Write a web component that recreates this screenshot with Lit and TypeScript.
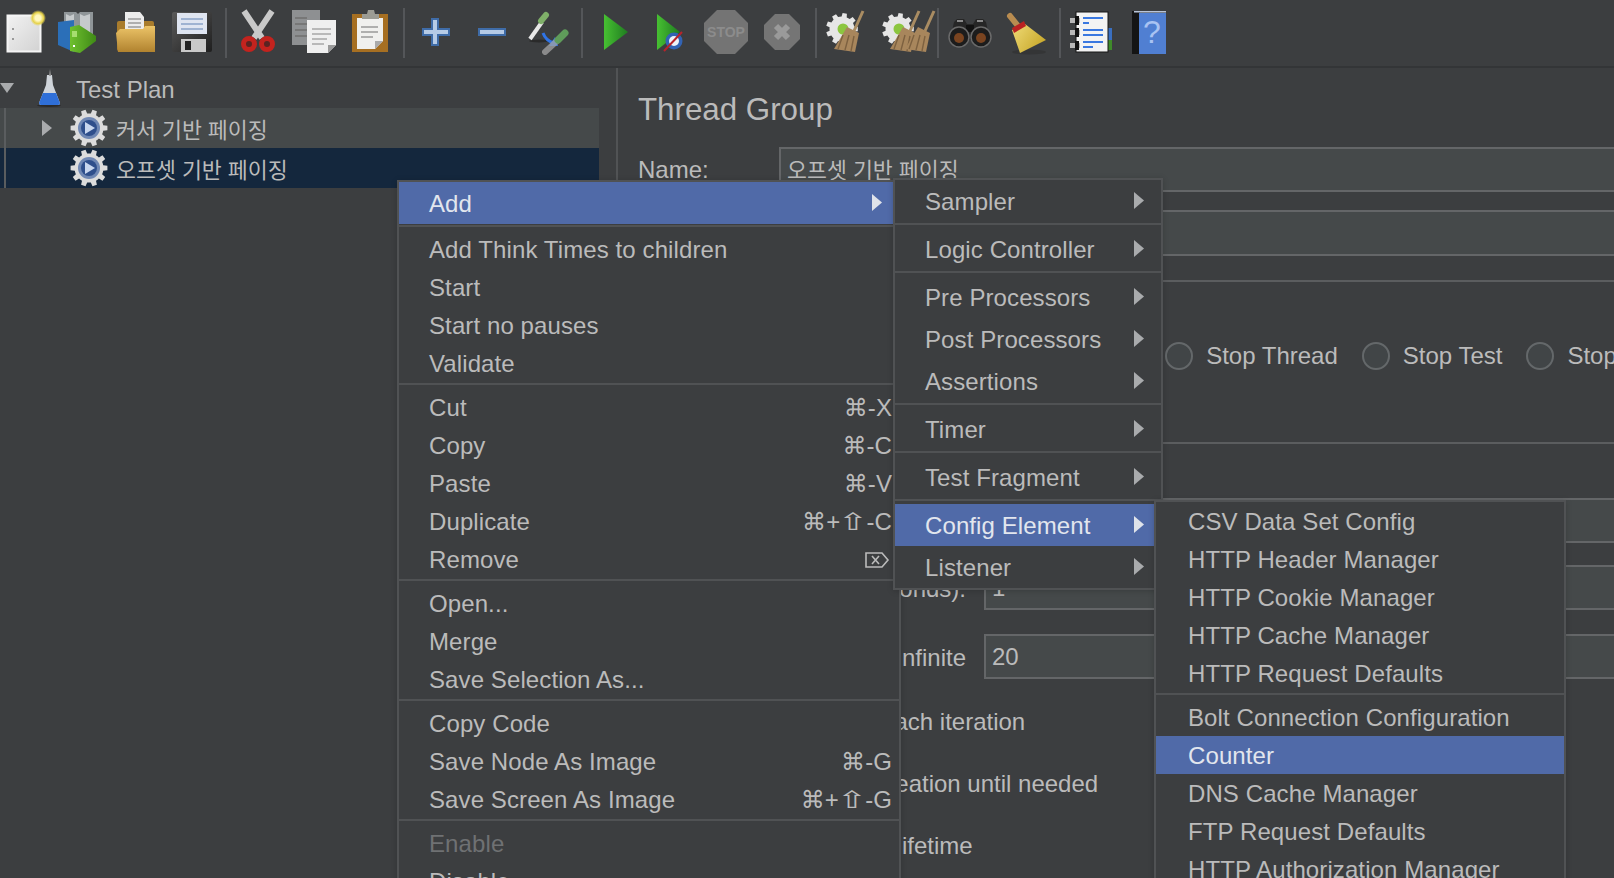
import { LitElement, css, html, svg } from "lit";
import { customElement } from "lit/decorators.js";
import { classMap } from "lit/directives/class-map.js";

type MenuItem = {
  label?: string;
  shortcut?: string;
  del?: boolean;
  arrow?: boolean;
  active?: boolean;
  disabled?: boolean;
  sep?: boolean;
};

const gearPath = (cx: number, cy: number, outer: number, inner: number, teeth: number) => {
  const pts: string[] = [];
  const step = (Math.PI * 2) / teeth;
  for (let i = 0; i < teeth; i++) {
    const a = i * step;
    const p = (r: number, o: number) =>
      `${(cx + r * Math.cos(a + o)).toFixed(1)},${(cy + r * Math.sin(a + o)).toFixed(1)}`;
    pts.push(p(inner, -step * 0.5), p(inner, -step * 0.3), p(outer, -step * 0.2), p(outer, step * 0.2), p(inner, step * 0.3));
  }
  return pts.join(" ");
};

const broomHead = (dx: number) => svg`
  <line x1=${38 + dx} y1="2" x2=${29 + dx} y2="22" stroke="#a98c62" stroke-width="3"></line>
  <polygon points="${22 + dx},18 ${34 + dx},24 ${30 + dx},43 ${9 + dx},40" fill="#a8865c"></polygon>
  <path d="M${18 + dx} 26L${13 + dx} 40M${24 + dx} 26L${20 + dx} 41M${29 + dx} 27L${26 + dx} 42" stroke="#7d6140" stroke-width="1.4" fill="none"></path>
`;

const clearGear = svg`
  <polygon points=${gearPath(17, 20, 16, 12.5, 9)} fill="#e6e6e6"></polygon>
  <circle cx="18" cy="20" r="5.5" fill="#8cc63f"></circle>
`;

const ICONS: Record<string, unknown> = {
  doc: svg`
    <defs><linearGradient id="d1" x1="0" y1="0" x2="1" y2="1"><stop offset="0" stop-color="#f2f2f2"></stop><stop offset="1" stop-color="#d2d2d2"></stop></linearGradient>
    <radialGradient id="d2"><stop offset="0.35" stop-color="#fff8c0"></stop><stop offset="0.7" stop-color="#e6d24a"></stop><stop offset="1" stop-color="#e6d24a" stop-opacity="0"></stop></radialGradient></defs>
    <rect x="6.5" y="6.5" width="33" height="36" fill="url(#d1)" stroke="#f5f5f5" stroke-width="2"></rect>
    <rect x="11" y="19" width="2" height="2" fill="#999"></rect><rect x="11" y="29" width="2" height="2" fill="#999"></rect>
    <circle cx="37" cy="9" r="8" fill="url(#d2)"></circle>`,
  tmpl: svg`
    <defs><linearGradient id="t1" x1="0" y1="0" x2="1" y2="0"><stop offset="0" stop-color="#6fc02f"></stop><stop offset="1" stop-color="#3f8a16"></stop></linearGradient></defs>
    <path d="M7 3h12l2 2 2-2h13v24H7z" fill="#8f9598"></path>
    <path d="M9 5l4 2 4-2v18H9zM23 5l4 2 6-2v18H23z" fill="#c6cacc"></path>
    <polygon points="1,13 17,11 17,43 1,36" fill="#2b6fb8"></polygon>
    <polygon points="13,18 22,16 39,27 39,32 23,44 13,42" fill="url(#t1)"></polygon>
    <rect x="15" y="22" width="5" height="6" fill="#a6dd70"></rect><rect x="16" y="36" width="2" height="2" fill="#fff"></rect>`,
  folder: svg`
    <defs><linearGradient id="f1" x1="0" y1="0" x2="0" y2="1"><stop offset="0" stop-color="#ecc468"></stop><stop offset="1" stop-color="#b1832f"></stop></linearGradient></defs>
    <rect x="4" y="12" width="37" height="30" rx="2" fill="#a97c2c"></rect>
    <polygon points="12,3 27,3 31,8 31,28 12,28" fill="#ececec"></polygon>
    <path d="M15 10h13M15 14h13M15 18h13M15 22h13" stroke="#9a9a9a" stroke-width="1.5"></path>
    <polygon points="3,24 7,20 30,20 32,17 42,17 42,43 5,43" fill="url(#f1)"></polygon>`,
  save: svg`
    <defs><linearGradient id="s1" x1="0" y1="0" x2="1" y2="1"><stop offset="0" stop-color="#5a5a5a"></stop><stop offset="1" stop-color="#1f1f1f"></stop></linearGradient></defs>
    <rect x="3" y="3" width="40" height="40" rx="2" fill="url(#s1)"></rect>
    <rect x="8" y="4" width="30" height="21" fill="#dfe5f1"></rect>
    <path d="M12 10h22M12 15h22M12 20h22" stroke="#8aa2c8" stroke-width="1.6"></path>
    <rect x="12" y="30" width="25" height="13" fill="#c9c9c9"></rect><rect x="16" y="32" width="6" height="9" fill="#222"></rect>`,
  cut: svg`
    <path d="M9 2L27 29M37 2L19 29" stroke="#c9c9c9" stroke-width="6" fill="none"></path>
    <circle cx="14" cy="35" r="5.5" fill="#5a2422" stroke="#c3231e" stroke-width="5"></circle>
    <circle cx="32" cy="35" r="5.5" fill="#5a2422" stroke="#c3231e" stroke-width="5"></circle>`,
  copy: svg`
    <rect x="1" y="1" width="28" height="35" fill="#8e9092"></rect>
    <path d="M4 9h12M4 15h12M4 21h12M4 27h12" stroke="#777" stroke-width="2"></path>
    <polygon points="16,11 45,11 45,36 37,44 16,44" fill="#efefef"></polygon>
    <polygon points="37,44 37,36 45,36" fill="#9a9a9a"></polygon>
    <path d="M21 20h19M21 25h19M21 30h15M21 35h12" stroke="#a8a8a8" stroke-width="1.6"></path>`,
  paste: svg`
    <rect x="5" y="5" width="36" height="38" fill="#a66f22"></rect>
    <polygon points="10,9 36,9 36,32 28,40 10,40" fill="#f0f0ee"></polygon>
    <polygon points="28,40 28,32 36,32" fill="#aaa"></polygon>
    <path d="M14 18h17M14 23h17M14 28h12" stroke="#999" stroke-width="1.6"></path>
    <path d="M15 10V5h5l1-4h6l1 4h4v5z" fill="#9c9c94"></path>`,
  plus: svg`<path d="M19 10h6v10h11v6H25v10h-6V26H10v-6h9z" fill="#b6cbe6" stroke="#3f6ca8" stroke-width="2"></path>`,
  minus: svg`<rect x="10" y="20" width="26" height="6" fill="#b6cbe6" stroke="#3f6ca8" stroke-width="2"></rect>`,
  dropper: svg`
    <ellipse cx="14" cy="32" rx="10" ry="1.5" fill="#2a2a2a"></ellipse>
    <line x1="5" y1="30" x2="17" y2="13" stroke="#e8e8e8" stroke-width="4"></line>
    <line x1="16" y1="12" x2="21" y2="6" stroke="#7fb069" stroke-width="6" stroke-linecap="round"></line>
    <path d="M18 24Q21 32 29 34" stroke="#2f74e6" stroke-width="3" fill="none"></path>
    <polygon points="30,28 33,37 24,37" fill="#2f74e6"></polygon>
    <line x1="20" y1="43" x2="33" y2="31" stroke="#a4a4a4" stroke-width="6" stroke-linecap="round" opacity=".75"></line>
    <line x1="33" y1="31" x2="40" y2="24" stroke="#5f9c5a" stroke-width="7" stroke-linecap="round"></line>`,
  run: svg`
    <defs><linearGradient id="r1" x1="0" y1="0" x2="1" y2="0"><stop offset="0" stop-color="#47c032"></stop><stop offset="1" stop-color="#1f7c20"></stop></linearGradient></defs>
    <polygon points="13,5 37,23 13,41" fill="url(#r1)"></polygon>`,
  nopause: svg`
    <defs><linearGradient id="n1" x1="0" y1="0" x2="1" y2="0"><stop offset="0" stop-color="#47c032"></stop><stop offset="1" stop-color="#1f7c20"></stop></linearGradient></defs>
    <polygon points="10,5 33,23 10,41" fill="url(#n1)"></polygon>
    <circle cx="27" cy="32" r="8.5" fill="#3263b4"></circle><circle cx="27" cy="32" r="5" fill="#eef2f8"></circle>
    <line x1="17" y1="42" x2="35" y2="23" stroke="#b8232a" stroke-width="2"></line>`,
  stop: svg`
    <polygon points="14,1 32,1 45,14 45,32 32,45 14,45 1,32 1,14" fill="#747474"></polygon>
    <text x="23" y="28" text-anchor="middle" font-family="Liberation Sans" font-weight="700" font-size="14" fill="#8c8c8c">STOP</text>`,
  shutdown: svg`
    <polygon points="16,5 30,5 41,16 41,30 30,41 16,41 5,30 5,16" fill="#757575"></polygon>
    <path d="M17 17L29 29M29 17L17 29" stroke="#9a9a9a" stroke-width="6"></path>`,
  clear: svg`${clearGear}${broomHead(0)}`,
  clearall: svg`${clearGear}${broomHead(0)}${broomHead(15)}`,
  bino: svg`
    <path d="M7 13l3-3h7l3 5h6l3-5h7l3 3 4 18H3z" fill="#262626"></path>
    <rect x="19" y="16" width="8" height="7" fill="#111"></rect>
    <circle cx="12" cy="28" r="10" fill="#1c1c1c" stroke="#6a6a6a" stroke-width="1.5"></circle>
    <circle cx="34" cy="28" r="10" fill="#1c1c1c" stroke="#6a6a6a" stroke-width="1.5"></circle>
    <circle cx="12" cy="29" r="5" fill="#7a4420"></circle><circle cx="34" cy="29" r="5" fill="#7a4420"></circle>
    <path d="M10 12h6M30 12h6" stroke="#8a8a8a" stroke-width="2"></path>`,
  broom: svg`
    <defs><linearGradient id="b1" x1="0" y1="0" x2="1" y2="0.6"><stop offset="0" stop-color="#f0dc78"></stop><stop offset="1" stop-color="#c9a92c"></stop></linearGradient></defs>
    <ellipse cx="26" cy="43" rx="17" ry="2.5" fill="#343536"></ellipse>
    <line x1="7" y1="7" x2="15" y2="17" stroke="#b98c50" stroke-width="6" stroke-linecap="round"></line>
    <polygon points="9,21 22,15 43,31 17,44" fill="url(#b1)"></polygon>
    <polygon points="9,19 21,12 23,17 11,24" fill="#bb2222"></polygon>`,
  log: svg`
    <rect x="33" y="19" width="10" height="12" fill="#3a6fc0"></rect><rect x="33" y="31" width="10" height="10" fill="#3f8a2a"></rect>
    <rect x="7" y="3" width="32" height="40" fill="#f3f3f3" stroke="#161616" stroke-width="1"></rect>
    <path d="M1 9h10v5H1zM1 21h10v5H1zM1 34h10v5H1z" fill="#b8b8b8"></path>
    <path d="M8 7v9M8 19v9M8 32v9" stroke="#111" stroke-width="4"></path>
    <path d="M14 9h20M14 14h6M14 21h20M14 26h20M14 33h20M14 38h10" stroke="#3a78e0" stroke-width="2"></path>`,
  help: svg`
    <rect x="7" y="2" width="8" height="43" fill="#141414"></rect>
    <rect x="14" y="4" width="27" height="41" fill="#507fd2"></rect>
    <rect x="9" y="2" width="32" height="1.5" fill="#b8c4d8"></rect>
    <text x="27" y="34" text-anchor="middle" font-family="Liberation Sans" font-size="32" fill="#a9c3f2">?</text>`,
};

const TOOLBAR: string[][] = [
  ["doc", "tmpl", "folder", "save"],
  ["cut", "copy", "paste"],
  ["plus", "minus", "dropper"],
  ["run", "nopause", "stop", "shutdown"],
  ["clear", "clearall"],
  ["bino", "broom"],
  ["log", "help"],
];

const MAIN_MENU: MenuItem[] = [
  { label: "Add", arrow: true, active: true },
  { sep: true },
  { label: "Add Think Times to children" },
  { label: "Start" },
  { label: "Start no pauses" },
  { label: "Validate" },
  { sep: true },
  { label: "Cut", shortcut: "⌘-X" },
  { label: "Copy", shortcut: "⌘-C" },
  { label: "Paste", shortcut: "⌘-V" },
  { label: "Duplicate", shortcut: "⌘+⇧-C" },
  { label: "Remove", del: true },
  { sep: true },
  { label: "Open..." },
  { label: "Merge" },
  { label: "Save Selection As..." },
  { sep: true },
  { label: "Copy Code" },
  { label: "Save Node As Image", shortcut: "⌘-G" },
  { label: "Save Screen As Image", shortcut: "⌘+⇧-G" },
  { sep: true },
  { label: "Enable", disabled: true },
  { label: "Disable" },
];

const ADD_MENU: MenuItem[] = [
  { label: "Sampler", arrow: true },
  { sep: true },
  { label: "Logic Controller", arrow: true },
  { sep: true },
  { label: "Pre Processors", arrow: true },
  { label: "Post Processors", arrow: true },
  { label: "Assertions", arrow: true },
  { sep: true },
  { label: "Timer", arrow: true },
  { sep: true },
  { label: "Test Fragment", arrow: true },
  { sep: true },
  { label: "Config Element", arrow: true, active: true },
  { label: "Listener", arrow: true },
];

const CONFIG_MENU: MenuItem[] = [
  { label: "CSV Data Set Config" },
  { label: "HTTP Header Manager" },
  { label: "HTTP Cookie Manager" },
  { label: "HTTP Cache Manager" },
  { label: "HTTP Request Defaults" },
  { sep: true },
  { label: "Bolt Connection Configuration" },
  { label: "Counter", active: true },
  { label: "DNS Cache Manager" },
  { label: "FTP Request Defaults" },
  { label: "HTTP Authorization Manager" },
];

@customElement("app-root")
export class AppRoot extends LitElement {
  static styles = css`
    :host {
      display: block;
      width: 1614px;
      height: 878px;
      overflow: hidden;
      position: relative;
      background: #3c3e40;
      color: #bbbbbb;
      font-family: "Liberation Sans", "Noto Sans CJK KR", sans-serif;
      font-size: 24px;
    }
    .toolbar {
      display: flex;
      align-items: center;
      gap: 8px;
      height: 66px;
      padding-left: 1px;
      border-bottom: 2px solid #333537;
      background: #3c3e40;
    }
    .tool-group {
      display: flex;
      gap: 8px;
    }
    .tool {
      display: block;
      width: 48px;
      height: 48px;
      overflow: visible;
    }
    .tool-sep {
      width: 2px;
      height: 50px;
      background: #545659;
    }
    .body {
      display: flex;
      height: 810px;
    }
    .tree {
      width: 599px;
      flex: none;
    }
    .tree-row {
      display: flex;
      align-items: center;
      height: 40px;
      white-space: nowrap;
    }
    .tree-child {
      padding-left: 42px;
      background: linear-gradient(#5a5d5f, #5a5d5f) 4px 0 / 2px 100% no-repeat, #45494a;
    }
    .tree-child.selected {
      background: linear-gradient(#5a5d5f, #5a5d5f) 4px 0 / 2px 100% no-repeat, #14273d;
    }
    .twist {
      display: block;
      flex: none;
    }
    .flask {
      margin: 0 15px 0 23px;
      flex: none;
    }
    .plan-label {
      padding-top: 4px;
    }
    .gear {
      margin: 0 8px 0 18px;
      flex: none;
    }
    .no-twist {
      width: 10px;
    }
    .ko {
      font-size: 21.7px;
    }
    .detail {
      flex: 1;
      margin-left: 17px;
      border-left: 2px solid #515355;
      padding-left: 20px;
      min-width: 0;
    }
    .title {
      font-size: 31.3px;
      line-height: 36px;
      padding-top: 24px;
      margin-bottom: 19px;
    }
    .field-row {
      display: flex;
      align-items: center;
    }
    .name-label {
      width: 141px;
      flex: none;
      padding-top: 1px;
    }
    .input {
      flex: 1;
      height: 45px;
      box-sizing: border-box;
      border: 2px solid #646668;
      border-right: none;
      background: #45494a;
      padding: 0 6px;
      line-height: 42px;
      white-space: nowrap;
    }
    .comments {
      margin: 18px 0 24px;
    }
    .comments .input {
      height: 46px;
    }
    .panel {
      border-top: 2px solid #5b5d5f;
      margin-left: -8px;
      padding-left: 8px;
      box-sizing: border-box;
    }
    .action {
      height: 162px;
    }
    .radios {
      display: flex;
      gap: 24px;
      padding: 60px 0 0 52px;
      white-space: nowrap;
    }
    .radio {
      display: flex;
      align-items: center;
      gap: 13px;
    }
    .radio i {
      display: block;
      width: 24px;
      height: 24px;
      border: 2px solid #64686a;
      border-radius: 50%;
      background: #414547;
    }
    .threads {
      padding-top: 54px;
    }
    .count-label {
      width: 328px;
      margin-right: 18px;
      padding-top: 2px;
      text-align: right;
      flex: none;
      white-space: nowrap;
    }
    .gap-22 {
      margin-top: 22px;
    }
    .gap-24 {
      margin-top: 24px;
    }
    .check-row {
      height: 62px;
      line-height: 62px;
      padding-left: 87px;
      white-space: nowrap;
    }
    .check-row.lifetime {
      padding-left: 91px;
    }
    .checks {
      padding-top: 12px;
    }
    .menu {
      position: absolute;
      box-sizing: border-box;
      border: 2px solid #505254;
      background: #3c3e40;
      box-shadow: 0 1px 6px rgba(0, 0, 0, 0.18);
      letter-spacing: 0.1px;
    }
    .menu-main {
      left: 397px;
      top: 180px;
      width: 504px;
      height: 760px;
    }
    .menu-add {
      left: 893px;
      top: 178px;
      width: 270px;
      height: 412px;
    }
    .menu-config {
      left: 1154px;
      top: 500px;
      width: 412px;
      height: 440px;
    }
    .item {
      display: flex;
      align-items: center;
      justify-content: space-between;
      box-sizing: border-box;
      height: 38px;
      padding: 2px 0 0 30px;
      white-space: nowrap;
    }
    .menu-config .item {
      padding-left: 32px;
    }
    .menu-add .item {
      height: 42px;
    }
    .menu-main .item:first-child {
      height: 42px;
      margin-bottom: 1px;
    }
    .active {
      background: #506aa8;
      color: #e2e6ee;
    }
    .disabled {
      color: #6f7173;
    }
    .sep {
      height: 2px;
      margin: 1px 0 3px;
      background: #505254;
    }
    .shortcut {
      position: absolute;
      right: 7px;
      font-family: "Liberation Sans", "DejaVu Sans", sans-serif;
    }
    .shift {
      display: inline-block;
      line-height: 0;
      margin: 0 3px;
      transform: scaleX(1.5);
    }
    .del {
      position: absolute;
      right: 9px;
    }
    .arrow {
      position: absolute;
      right: 17px;
      margin-top: -4px;
    }
  `;

  private tool(name: string) {
    return html`<svg class="tool" viewBox="0 0 48 48">${ICONS[name]}</svg>`;
  }

  private gearIcon() {
    return html`<svg class="gear" width="38" height="38" viewBox="0 0 38 38">
      <polygon points=${gearPath(19, 19, 18.5, 14.5, 10)} fill="#dcdcdc"></polygon>
      <circle cx="19" cy="19" r="11" fill="#7088b4"></circle>
      <circle cx="19" cy="19" r="8" fill="#2f4f8c"></circle>
      <polygon points="15,13 25,19 15,25" fill="#c8d6ee"></polygon>
    </svg>`;
  }

  private renderShortcut(text: string) {
    const [before, after] = text.split("⇧");
    if (after === undefined) return html`<span class="shortcut">${text}</span>`;
    return html`<span class="shortcut">${before}<span class="shift">⇧</span>${after}</span>`;
  }

  private renderItem(item: MenuItem) {
    if (item.sep) return html`<div class="sep"></div>`;
    const cls = { item: true, active: !!item.active, disabled: !!item.disabled };
    return html`<div class=${classMap(cls)}>
      <span>${item.label}</span>
      ${item.shortcut ? this.renderShortcut(item.shortcut) : null}
      ${item.del
        ? html`<svg class="del" width="26" height="20" viewBox="0 0 26 20" fill="none" stroke="#bbb" stroke-width="1.6">
            <path d="M2 3h16l6 7-6 7H2z"></path>
            <path d="M8 6l7 8M15 6l-7 8"></path>
          </svg>`
        : null}
      ${item.arrow
        ? html`<svg class="arrow" width="10" height="17" viewBox="0 0 10 17">
            <polygon points="0,0 10,8.5 0,17" fill=${item.active ? "#dfe3ea" : "#a9abad"}></polygon>
          </svg>`
        : null}
    </div>`;
  }

  private renderMenu(cls: string, items: MenuItem[]) {
    return html`<div class="menu ${cls}">${items.map((i) => this.renderItem(i))}</div>`;
  }

  render() {
    return html`
      <div class="toolbar">
        ${TOOLBAR.map(
          (group, i) => html`
            ${i > 0 ? html`<div class="tool-sep"></div>` : null}
            <div class="tool-group">${group.map((n) => this.tool(n))}</div>
          `
        )}
      </div>
      <div class="body">
        <div class="tree">
          <div class="tree-row">
            <svg class="twist" width="14" height="10" viewBox="0 0 14 10"><polygon points="0,0 14,0 7,10" fill="#a9abad"></polygon></svg>
            <svg class="flask" width="24" height="38" viewBox="0 0 24 38">
              <ellipse cx="12" cy="36.5" rx="12" ry="1.5" fill="#2a2a2a"></ellipse>
              <path d="M10 6h5l1 10 7 18q0 2-2 2H4q-2 0-2-2l7-18z" fill="#cfd4da"></path>
              <path d="M13 0l1 7h-2z" fill="#999"></path>
              <path d="M6 24h13l4 10q0 2-2 2H4q-2 0-2-2z" fill="#2f6fd8"></path>
            </svg>
            <span class="plan-label">Test Plan</span>
          </div>
          <div class="tree-row tree-child">
            <svg class="twist" width="10" height="16" viewBox="0 0 10 16"><polygon points="0,0 10,8 0,16" fill="#a9abad"></polygon></svg>
            ${this.gearIcon()}
            <span class="ko">커서 기반 페이징</span>
          </div>
          <div class="tree-row tree-child selected">
            <div class="no-twist"></div>
            ${this.gearIcon()}
            <span class="ko">오프셋 기반 페이징</span>
          </div>
        </div>
        <div class="detail">
          <div class="title">Thread Group</div>
          <div class="field-row">
            <div class="name-label">Name:</div>
            <div class="input"><span class="ko">오프셋 기반 페이징</span></div>
          </div>
          <div class="field-row comments">
            <div class="name-label">Comments:</div>
            <div class="input"></div>
          </div>
          <div class="panel action">
            <div class="radios">
              <div class="radio"><i></i>Continue</div>
              <div class="radio"><i></i>Start Next Thread Loop</div>
              <div class="radio"><i></i>Stop Thread</div>
              <div class="radio"><i></i>Stop Test</div>
              <div class="radio"><i></i>Stop Test Now</div>
            </div>
          </div>
          <div class="panel threads">
            <div class="field-row">
              <div class="count-label">Number of Threads (users):</div>
              <div class="input"></div>
            </div>
            <div class="field-row gap-22">
              <div class="count-label">Ramp-up period (seconds):</div>
              <div class="input">1</div>
            </div>
            <div class="field-row gap-24">
              <div class="count-label">Loop Count: Infinite</div>
              <div class="input">20</div>
            </div>
            <div class="checks">
              <div class="check-row">Same user on each iteration</div>
              <div class="check-row">Delay Thread creation until needed</div>
              <div class="check-row lifetime">Specify Thread lifetime</div>
            </div>
          </div>
        </div>
      </div>
      ${this.renderMenu("menu-main", MAIN_MENU)}
      ${this.renderMenu("menu-add", ADD_MENU)}
      ${this.renderMenu("menu-config", CONFIG_MENU)}
    `;
  }
}
